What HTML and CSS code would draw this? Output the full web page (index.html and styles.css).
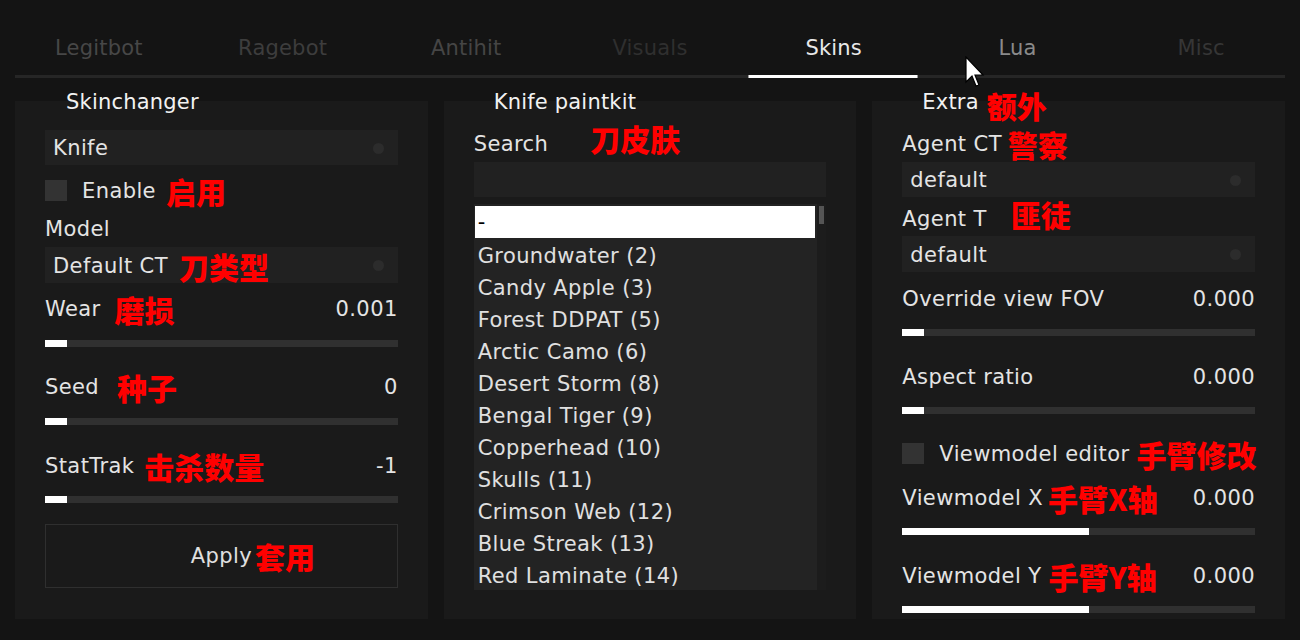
FILE: index.html
```html
<!DOCTYPE html>
<html lang="en">
<head>
<meta charset="utf-8">
<title>Skins</title>
<link rel="stylesheet" href="styles.css">
</head>
<body>
<nav class="tabs">
  <div class="tab c-legit">Legitbot</div>
  <div class="tab c-rage">Ragebot</div>
  <div class="tab c-anti">Antihit</div>
  <div class="tab c-vis">Visuals</div>
  <div class="tab c-skins active">Skins</div>
  <div class="tab c-lua">Lua</div>
  <div class="tab c-misc">Misc</div>
</nav>
<div class="tabline"></div>

<main class="panels">
  <section class="panel">
    <div class="ptitle">Skinchanger</div>
    <div class="combo mt16"><span>Knife</span><i class="dot"></i></div>
    <div class="check mt15"><i class="box"></i><span>Enable</span><span class="cn g10">启用</span></div>
    <div class="row mt15">Model</div>
    <div class="combo h36 mt7"><span>Default CT</span><span class="cn g11">刀类型</span><i class="dot"></i></div>
    <div class="row mt13"><span>Wear</span><span class="cn g14">磨损</span><span class="val">0.001</span></div>
    <div class="slider mt20"><div class="fill" style="width:22px"></div></div>
    <div class="row mt27"><span>Seed</span><span class="cn g18">种子</span><span class="val">0</span></div>
    <div class="slider mt20"><div class="fill" style="width:22px"></div></div>
    <div class="row mt28"><span>StatTrak</span><span class="cn g10">击杀数量</span><span class="val">-1</span></div>
    <div class="slider mt19"><div class="fill" style="width:22px"></div></div>
    <div class="btn mt21"><span>Apply</span><span class="cn g3 pull">套用</span></div>
  </section>

  <section class="panel">
    <div class="ptitle pt20">Knife paintkit</div>
    <div class="row mt17"><span>Search</span><span class="cn g42 up6">刀皮肤</span></div>
    <div class="input mt7"></div>
    <div class="list mt7">
      <div class="items">
        <div class="item sel">-</div>
        <div class="item">Groundwater (2)</div>
        <div class="item">Candy Apple (3)</div>
        <div class="item">Forest DDPAT (5)</div>
        <div class="item">Arctic Camo (6)</div>
        <div class="item">Desert Storm (8)</div>
        <div class="item">Bengal Tiger (9)</div>
        <div class="item">Copperhead (10)</div>
        <div class="item">Skulls (11)</div>
        <div class="item">Crimson Web (12)</div>
        <div class="item">Blue Streak (13)</div>
        <div class="item">Red Laminate (14)</div>
      </div>
      <div class="scroll"><div class="thumb"></div></div>
    </div>
  </section>

  <section class="panel">
    <div class="ptitle pt20"><span>Extra</span><span class="cn g8 dn3">额外</span></div>
    <div class="row mt17"><span>Agent CT</span><span class="cn g6">警察</span></div>
    <div class="combo mt7"><span>default</span><i class="dot"></i></div>
    <div class="row mt9"><span>Agent T</span><span class="cn g24 up5">匪徒</span></div>
    <div class="combo h36 mt6"><span>default</span><i class="dot"></i></div>
    <div class="row mt14"><span>Override view FOV</span><span class="val">0.000</span></div>
    <div class="slider mt19"><div class="fill" style="width:22px"></div></div>
    <div class="row mt28"><span>Aspect ratio</span><span class="val">0.000</span></div>
    <div class="slider mt19"><div class="fill" style="width:22px"></div></div>
    <div class="check mt29"><i class="box"></i><span>Viewmodel editor</span><span class="cn g7">手臂修改</span></div>
    <div class="row mt21"><span>Viewmodel X</span><span class="cn g5">手臂X轴</span><span class="val">0.000</span></div>
    <div class="slider mt19"><div class="fill" style="width:187px"></div></div>
    <div class="row mt28"><span>Viewmodel Y</span><span class="cn g7">手臂Y轴</span><span class="val">0.000</span></div>
    <div class="slider mt19"><div class="fill" style="width:187px"></div></div>
  </section>
</main>

<svg class="cursor" width="20" height="34" viewBox="0 0 20 34">
  <path d="M1 1 L1 26 L7 20 L11 30 L14 29 L10 19 L18 19 Z" fill="#ffffff" stroke="#000000" stroke-width="1.2" stroke-linejoin="miter"/>
</svg>
</body>
</html>
```

FILE: styles.css
```css
* { box-sizing: border-box; }
html, body { margin: 0; padding: 0; }
body {
  width: 1300px;
  height: 640px;
  overflow: hidden;
  position: relative;
  background: #141414;
  color: #e4e4e4;
  font-family: "DejaVu Sans", Verdana, sans-serif;
  font-size: 21px;
  letter-spacing: 0.4px;
}

/* tabs */
.tabs { display: flex; height: 75px; padding: 0 7px; }
.tab {
  flex: 1;
  position: relative;
  display: flex;
  align-items: flex-end;
  justify-content: center;
  padding-bottom: 15px;
  line-height: 24px;
  letter-spacing: 0.2px;
}
.c-legit { color: #474747; }
.c-rage { color: #3d3d3d; }
.c-anti { color: #454545; }
.c-vis { color: #2f2f2f; }
.c-skins { color: #e8e8e8; }
.c-lua { color: #8a8a8a; }
.c-misc { color: #363636; }
.tab.active::after {
  content: "";
  position: absolute;
  left: 6px;
  right: 8px;
  bottom: -3px;
  height: 3px;
  background: #ffffff;
  border-left: 1px solid #9a9a9a;
  border-right: 1px solid #9a9a9a;
}
.tabline { height: 3px; margin: 0 15px; background: #262626; }

/* panels */
.panels {
  display: grid;
  grid-template-columns: repeat(3, minmax(0, 1fr));
  gap: 16px;
  margin: 23px 15px 0;
}
.panel {
  height: 518px;
  min-width: 0;
  background: #1a1a1a;
  padding: 0 30px;
  display: flex;
  flex-direction: column;
}
.ptitle {
  margin-top: -11px;
  height: 24px;
  line-height: 24px;
  padding-left: 21px;
  color: #f2f2f2;
  display: flex;
  align-items: center;
  white-space: nowrap;
  letter-spacing: 0.2px;
}
.ptitle.pt20 { padding-left: 20px; }

.row {
  height: 24px;
  line-height: 24px;
  padding-top: 2px;
  display: flex;
  align-items: center;
  white-space: nowrap;
}
.val { margin-left: auto; }

.combo, .input {
  height: 35px;
  background: #212121;
  display: flex;
  align-items: center;
  padding: 1px 14px 0 8px;
  white-space: nowrap;
}
.combo.h36 { height: 36px; }
.dot {
  margin-left: auto;
  width: 11px;
  height: 11px;
  border-radius: 50%;
  background: #2c2c2c;
}

.check { height: 21px; display: flex; align-items: center; white-space: nowrap; }
.box { width: 22px; height: 21px; background: #333333; margin-right: 15px; flex: none; }

.slider { height: 7px; background: #303030; flex: none; }
.fill { height: 100%; background: #ffffff; }

.btn {
  height: 64px;
  border: 1px solid #2f2f2f;
  display: flex;
  align-items: center;
  justify-content: center;
  color: #e0e0e0;
}

/* list */
.list { height: 386px; display: flex; flex: none; }
.items {
  flex: 1;
  background: #232323;
  padding: 2px 2px 0 1px;
  overflow: hidden;
}
.item {
  height: 32px;
  line-height: 36px;
  padding-left: 3px;
  color: #e0e0e0;
  white-space: nowrap;
}
.item.sel { background: #ffffff; color: #000000; line-height: 32px; }
.scroll { width: 9px; background: #1c1c1c; padding: 2px; }
.thumb { height: 18px; background: #555555; }

/* red annotations */
.cn {
  font-family: "Noto Sans CJK SC", "Noto Sans CJK JP", sans-serif;
  font-weight: 900;
  font-size: 30px;
  line-height: 24px;
  color: #ff0000;
  letter-spacing: 0;
}
.g3 { margin-left: 3px; }
.g5 { margin-left: 5px; }
.g6 { margin-left: 6px; }
.g7 { margin-left: 7px; }
.g8 { margin-left: 8px; }
.g10 { margin-left: 10px; }
.g11 { margin-left: 11px; }
.g14 { margin-left: 14px; }
.g18 { margin-left: 18px; }
.g24 { margin-left: 24px; }
.g42 { margin-left: 42px; }
.up6 { margin-bottom: 12px; }
.up5 { margin-bottom: 10px; }
.dn3 { margin-top: 6px; }
.pull { margin-right: -63px; }

/* spacing */
.mt6 { margin-top: 6px; }
.mt7 { margin-top: 7px; }
.mt9 { margin-top: 9px; }
.mt13 { margin-top: 13px; }
.mt14 { margin-top: 14px; }
.mt15 { margin-top: 15px; }
.mt16 { margin-top: 16px; }
.mt17 { margin-top: 17px; }
.mt19 { margin-top: 19px; }
.mt20 { margin-top: 20px; }
.mt21 { margin-top: 21px; }
.mt27 { margin-top: 27px; }
.mt28 { margin-top: 28px; }
.mt29 { margin-top: 29px; }

.cursor { position: absolute; left: 965px; top: 56px; }
```
